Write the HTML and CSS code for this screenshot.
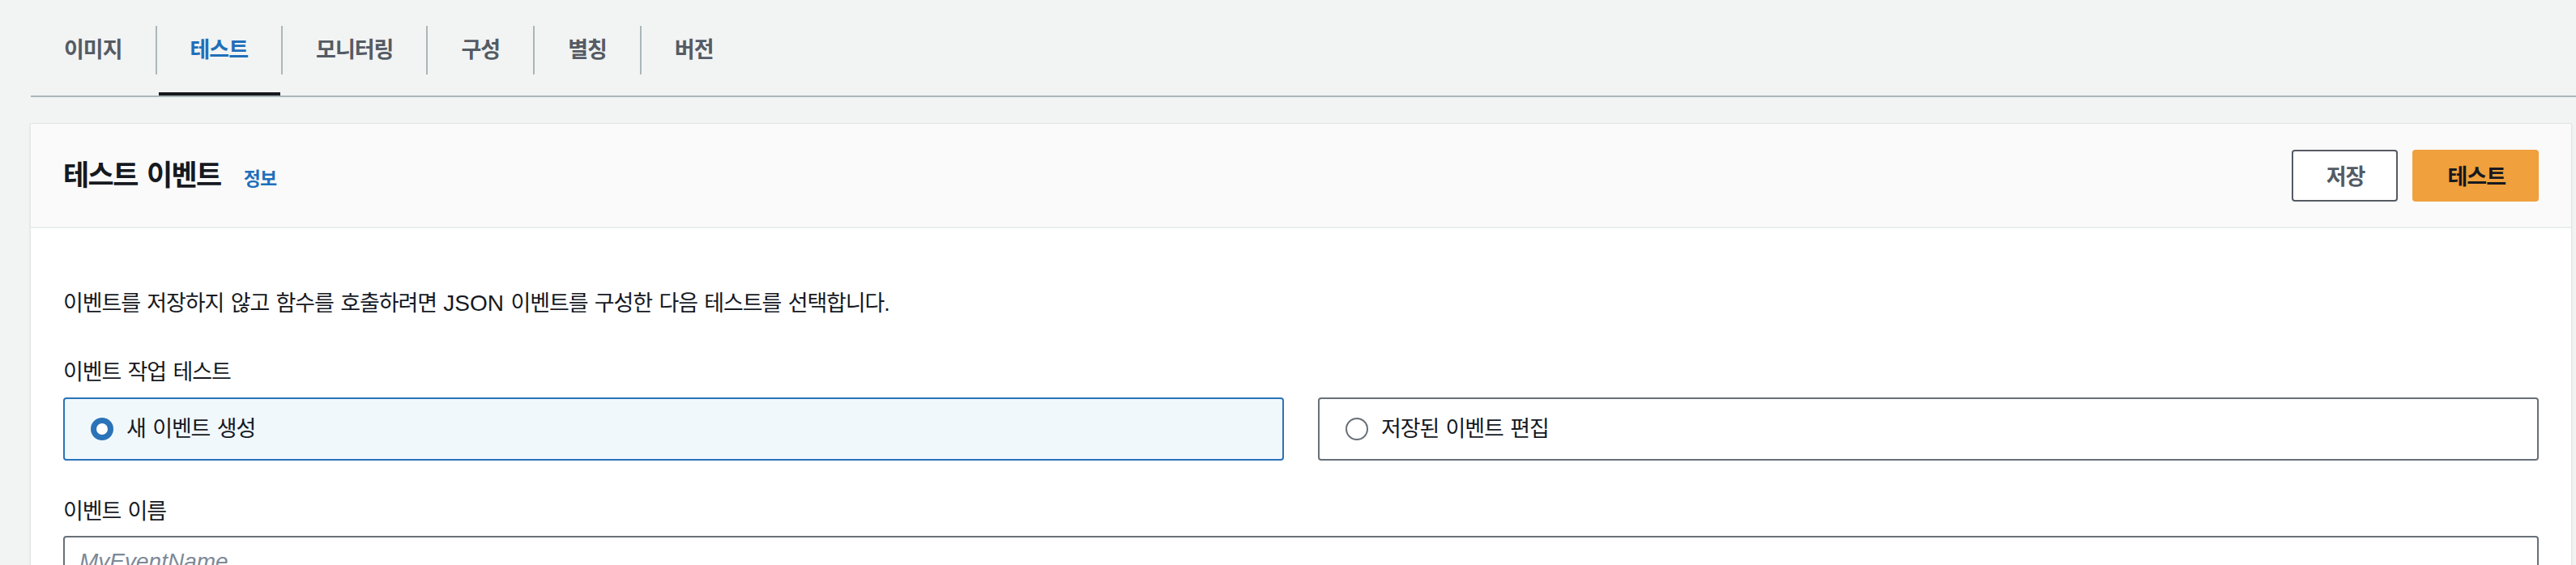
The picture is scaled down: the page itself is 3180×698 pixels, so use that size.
FILE: index.html
```html
<!DOCTYPE html>
<html lang="ko">
<head>
<meta charset="utf-8">
<title>테스트 이벤트</title>
<link rel="stylesheet" href="styles.css">
</head>
<body>
<nav class="tabs">
  <a class="tab"><span class="tab-label">이미지</span></a>
  <a class="tab active"><span class="tab-label">테스트</span></a>
  <a class="tab"><span class="tab-label">모니터링</span></a>
  <a class="tab"><span class="tab-label">구성</span></a>
  <a class="tab"><span class="tab-label">별칭</span></a>
  <a class="tab last"><span class="tab-label">버전</span></a>
</nav>
<section class="card">
  <header class="card-header">
    <div class="title-group">
      <h2 class="title">테스트 이벤트</h2>
      <a class="info">정보</a>
    </div>
    <div class="actions">
      <button class="btn btn-normal">저장</button>
      <button class="btn btn-primary">테스트</button>
    </div>
  </header>
  <div class="card-body">
    <p class="desc">이벤트를 저장하지 않고 함수를 호출하려면 <span class="latin">JSON</span> 이벤트를 구성한 다음 테스트를 선택합니다.</p>
    <div class="field field-action">
      <div class="label">이벤트 작업 테스트</div>
      <div class="tiles">
        <label class="tile selected"><span class="radio checked"></span><span class="tile-text">새 이벤트 생성</span></label>
        <label class="tile"><span class="radio"></span><span class="tile-text">저장된 이벤트 편집</span></label>
      </div>
    </div>
    <div class="field field-name">
      <div class="label">이벤트 이름</div>
      <input class="input" type="text" placeholder="MyEventName">
    </div>
  </div>
</section>
</body>
</html>
```
FILE: styles.css
```css
html, body {
  margin: 0;
  padding: 0;
}
body {
  background: #f2f3f3;
  font-family: "Liberation Sans", "Noto Sans CJK KR", sans-serif;
  color: #16191f;
  width: 3180px;
  height: 698px;
  overflow: hidden;
}

/* Tabs */
.tabs {
  display: flex;
  margin-left: 38px;
  height: 118px;
  border-bottom: 2px solid #aab7b8;
}
.tab {
  position: relative;
  padding-top: 32px;
  font-size: 27px;
  font-weight: 700;
  letter-spacing: -1px;
  color: #545b64;
  text-decoration: none;
}
.tab-label {
  display: block;
  height: 60px;
  line-height: 60px;
  padding: 0 41px 0 41px;
  border-right: 2px solid #aab7b8;
}
.tab.last .tab-label {
  border-right: none;
}
.tab.active {
  color: #1f6fba;
}
.tab.active::after {
  content: "";
  position: absolute;
  left: 2px;
  right: 3px;
  bottom: 0;
  height: 4px;
  background: #16191f;
}

/* Card */
.card {
  margin: 33px 6px 0 38px;
  background: #ffffff;
  box-shadow: 0 0 0 1px #e3e6e6, 0 2px 3px rgba(0, 28, 36, 0.2);
}
.card-header {
  display: flex;
  align-items: center;
  justify-content: space-between;
  height: 127px;
  padding: 0 40px;
  background: #fafafa;
  border-bottom: 2px solid #eaeded;
}
.title-group {
  display: flex;
  align-items: baseline;
  gap: 28px;
}
.title {
  margin: 0;
  font-size: 35px;
  font-weight: 700;
  letter-spacing: -1.6px;
  word-spacing: 3px;
  line-height: 48px;
  color: #16191f;
}
.info {
  font-size: 23px;
  font-weight: 700;
  letter-spacing: -1px;
  color: #1f6fba;
}
.actions {
  display: flex;
  gap: 18px;
}
.btn {
  height: 64px;
  box-sizing: border-box;
  padding: 0 39px 0 41px;
  border: 2px solid;
  border-radius: 4px;
  font-family: inherit;
  font-size: 27px;
  font-weight: 700;
  letter-spacing: -1px;
}
.btn-normal {
  background: #ffffff;
  border-color: #545b64;
  color: #545b64;
}
.btn-primary {
  background: #f0a03c;
  border-color: #f0a03c;
  color: #16191f;
}

/* Body */
.card-body {
  padding: 73px 40px 40px;
}
.desc {
  margin: 0;
  font-size: 27px;
  letter-spacing: -1.1px;
  word-spacing: 2px;
  line-height: 40px;
}
.latin {
  font-size: 28px;
  letter-spacing: 0;
}
.label {
  font-size: 27px;
  letter-spacing: -1.1px;
  word-spacing: 2px;
  line-height: 40px;
}
.field-action {
  margin-top: 45px;
}
.field-name {
  margin-top: 43px;
}
.tiles {
  display: grid;
  grid-template-columns: 1fr 1fr;
  gap: 42px;
  margin-top: 11px;
}
.tile {
  display: flex;
  align-items: center;
  height: 78px;
  box-sizing: border-box;
  border: 2px solid #687078;
  border-radius: 4px;
  padding-left: 32px;
  background: #ffffff;
}
.tile.selected {
  border-color: #2b73b9;
  background: #f1f8fc;
}
.radio {
  flex: none;
  width: 28px;
  height: 28px;
  box-sizing: border-box;
  border-radius: 50%;
  border: 2px solid #687078;
  background: #ffffff;
}
.radio.checked {
  border: 7px solid #2b73b9;
}
.tile-text {
  margin-left: 16px;
  font-size: 27px;
  letter-spacing: -1.1px;
  word-spacing: 2px;
  line-height: 40px;
}
.input {
  display: block;
  width: 100%;
  height: 64px;
  box-sizing: border-box;
  margin: 10px 0 0;
  padding: 0 18px;
  border: 2px solid #687078;
  border-radius: 4px;
  background: #ffffff;
  font-family: inherit;
  font-size: 28px;
}
.input::placeholder {
  color: #7d8998;
  font-style: italic;
}
```
